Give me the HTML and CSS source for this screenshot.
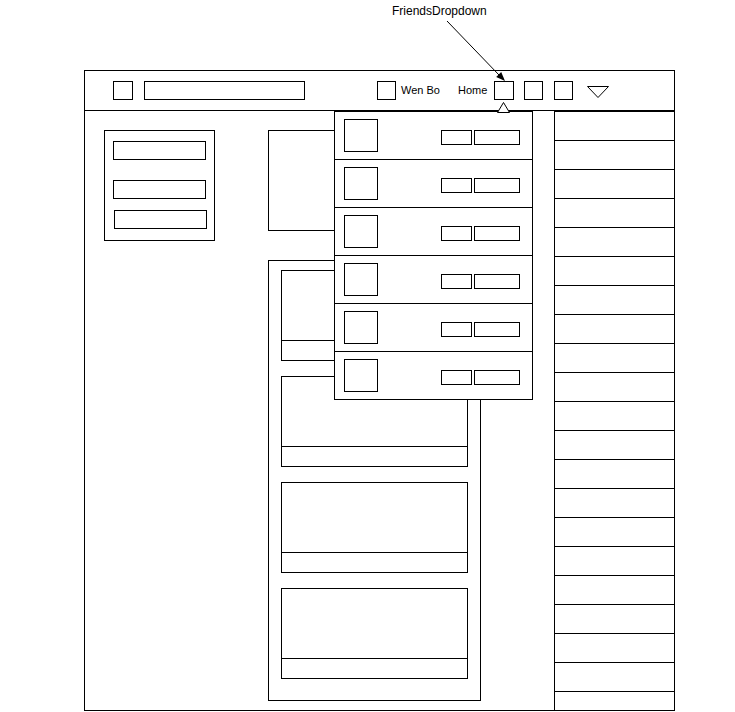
FILE: index.html
```html
<!DOCTYPE html>
<html lang="en">
<head>
    <meta charset="UTF-8">
    <meta name="viewport" content="width=device-width, initial-scale=1.0">
    <title>Friends Dropdown - Wireframe</title>
    <link rel="stylesheet" href="styles.css">
</head>
<body>
    <!-- annotation over the mockup -->
    <div class="note-label">FriendsDropdown</div>
    <svg class="note-arrow" width="735" height="100" viewBox="0 0 735 100">
        <line x1="447" y1="21" x2="499" y2="75" stroke="#000" stroke-width="1"/>
        <polygon points="505,81 496.2,76.9 501.2,72.1" fill="#000"/>
    </svg>

    <div class="page">
        <div class="header">
            <div class="box logo"></div>
            <div class="box search"></div>

            <div class="box avatar-sm user-pic"></div>
            <span class="nav-text user-name">Wen Bo</span>
            <span class="nav-text home-link">Home</span>
            <div class="box icon friends-icon"></div>
            <div class="box icon msg-icon"></div>
            <div class="box icon notif-icon"></div>
            <svg class="menu-arrow" width="22" height="12" viewBox="0 0 22 12">
                <polygon points="0.5,0.5 21.5,0.5 11,11.5" fill="none" stroke="#000" stroke-width="1"/>
            </svg>
        </div>

        <div class="content">
            <div class="sidebar">
                <div class="box side-panel">
                    <div class="box side-field"></div>
                    <div class="box side-field"></div>
                    <div class="box side-field"></div>
                </div>
            </div>

            <div class="main">
                <div class="box composer"></div>
                <div class="box feed">
                    <div class="box post"><div class="post-body"></div><div class="post-footer"></div></div>
                    <div class="box post"><div class="post-body"></div><div class="post-footer"></div></div>
                    <div class="box post"><div class="post-body"></div><div class="post-footer"></div></div>
                    <div class="box post"><div class="post-body"></div><div class="post-footer"></div></div>
                </div>
            </div>

            <div class="contacts">
                <div class="contact-row"></div>
                <div class="contact-row"></div>
                <div class="contact-row"></div>
                <div class="contact-row"></div>
                <div class="contact-row"></div>
                <div class="contact-row"></div>
                <div class="contact-row"></div>
                <div class="contact-row"></div>
                <div class="contact-row"></div>
                <div class="contact-row"></div>
                <div class="contact-row"></div>
                <div class="contact-row"></div>
                <div class="contact-row"></div>
                <div class="contact-row"></div>
                <div class="contact-row"></div>
                <div class="contact-row"></div>
                <div class="contact-row"></div>
                <div class="contact-row"></div>
                <div class="contact-row"></div>
                <div class="contact-row"></div>
                <div class="contact-row"></div>
            </div>
        </div>

        <!-- friends dropdown, opened -->
        <svg class="dropdown-caret" width="14" height="11" viewBox="0 0 14 11">
            <polygon points="0.5,10.5 6.5,0.5 12.5,10.5" fill="#fff" stroke="#000" stroke-width="1"/>
        </svg>
        <div class="dropdown">
            <div class="request">
                <div class="box request-pic"></div>
                <div class="request-actions">
                    <div class="box btn-small"></div>
                    <div class="box btn-wide"></div>
                </div>
            </div>
            <div class="request">
                <div class="box request-pic"></div>
                <div class="request-actions">
                    <div class="box btn-small"></div>
                    <div class="box btn-wide"></div>
                </div>
            </div>
            <div class="request">
                <div class="box request-pic"></div>
                <div class="request-actions">
                    <div class="box btn-small"></div>
                    <div class="box btn-wide"></div>
                </div>
            </div>
            <div class="request">
                <div class="box request-pic"></div>
                <div class="request-actions">
                    <div class="box btn-small"></div>
                    <div class="box btn-wide"></div>
                </div>
            </div>
            <div class="request">
                <div class="box request-pic"></div>
                <div class="request-actions">
                    <div class="box btn-small"></div>
                    <div class="box btn-wide"></div>
                </div>
            </div>
            <div class="request">
                <div class="box request-pic"></div>
                <div class="request-actions">
                    <div class="box btn-small"></div>
                    <div class="box btn-wide"></div>
                </div>
            </div>
        </div>
    </div>
</body>
</html>
```

FILE: styles.css
```css
* {
    margin: 0;
    padding: 0;
    box-sizing: border-box;
}

body {
    font-family: "Liberation Sans", Arial, sans-serif;
    background: #fff;
    color: #000;
    position: relative;
    min-height: 712px;
}

.box {
    border: 1px solid #000;
    background: #fff;
}

/* annotation */
.note-label {
    position: absolute;
    left: 392px;
    top: 4px;
    font-size: 12px;
    line-height: 14px;
}

.note-arrow {
    position: absolute;
    left: 0;
    top: 0;
    pointer-events: none;
}

/* frame */
.page {
    position: relative;
    margin: 70px 0 0 84px;
    width: 591px;
    height: 641px;
    border: 1px solid #000;
}

.header {
    display: flex;
    align-items: center;
    height: 40px;
    padding-left: 28px;
    border-bottom: 1px solid #000;
}

.logo {
    width: 20px;
    height: 19px;
}

.search {
    width: 161px;
    height: 19px;
    margin-left: 11px;
}

.user-pic {
    width: 19px;
    height: 19px;
    margin-left: 72px;
}

.nav-text {
    font-size: 11px;
    line-height: 13px;
}

.user-name {
    margin-left: 5px;
}

.home-link {
    margin-left: 18px;
}

.icon {
    width: 19px;
    height: 19px;
}

.friends-icon {
    width: 20px;
    margin-left: 7px;
}

.msg-icon {
    margin-left: 10px;
}

.notif-icon {
    margin-left: 11px;
}

.menu-arrow {
    margin-left: 14px;
    margin-top: 2px;
}

/* body columns */
.content {
    display: flex;
    height: 599px;
    overflow: hidden;
}

.sidebar {
    width: 183px;
    padding: 19px 0 0 19px;
}

.side-panel {
    width: 111px;
    height: 111px;
    padding: 10px 8px;
}

.side-field {
    width: 93px;
    height: 19px;
}

.side-field:nth-child(2) {
    margin-top: 20px;
}

.side-field:nth-child(3) {
    margin-top: 11px;
    margin-left: 1px;
}

.main {
    width: 213px;
    padding-top: 19px;
}

.composer {
    height: 101px;
}

.feed {
    height: 441px;
    margin-top: 29px;
    padding: 9px 12px;
    display: flex;
    flex-direction: column;
    gap: 15px;
}

.post {
    height: 91px;
    display: flex;
    flex-direction: column;
}

.post-body {
    height: 69px;
}

.post-footer {
    flex: 1;
    border-top: 1px solid #000;
}

.contacts {
    width: 120px;
    margin-left: auto;
    border-left: 1px solid #000;
    border-top: 1px solid #000;
    overflow: hidden;
}

.contact-row {
    height: 29px;
    border-bottom: 1px solid #000;
}

/* dropdown */
.dropdown-caret {
    position: absolute;
    left: 412px;
    top: 31px;
    z-index: 3;
}

.dropdown {
    position: absolute;
    left: 249px;
    top: 40px;
    width: 199px;
    background: #fff;
    border: 1px solid #000;
    border-bottom: none;
    z-index: 2;
}

.request {
    display: flex;
    align-items: center;
    height: 48px;
    padding: 0 12px 0 9px;
    border-bottom: 1px solid #000;
}

.request-pic {
    width: 34px;
    height: 33px;
}

.request-actions {
    display: flex;
    gap: 2px;
    margin-left: auto;
    margin-top: 4px;
}

.btn-small {
    width: 31px;
    height: 15px;
}

.btn-wide {
    width: 46px;
    height: 15px;
}
```
